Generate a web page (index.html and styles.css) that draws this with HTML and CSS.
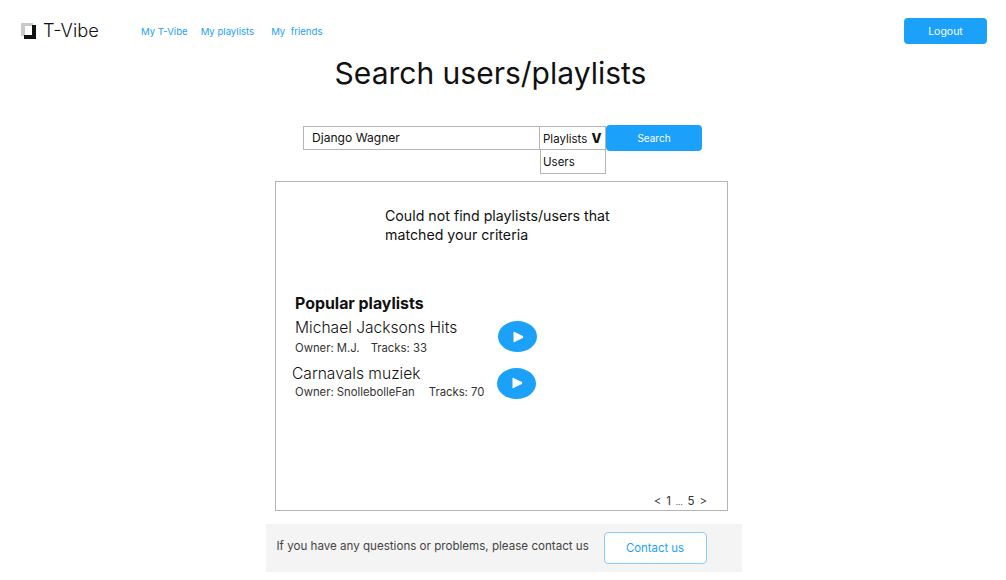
FILE: index.html
```html
<!DOCTYPE html>
<html lang="en">
<head>
    <meta charset="UTF-8">
    <title>T-Vibe - Search</title>
    <link rel="stylesheet" href="styles.css">
</head>
<body>
    <header class="topbar">
        <div class="brand">
            <svg class="brand-icon" width="16" height="16" viewBox="0 0 16 16">
                <rect x="0" y="0" width="12" height="13" fill="#c9c9c9"/>
                <path d="M4 3H11V12H4Z" fill="#fff"/>
                <path d="M11 2H15V16H3V12H11Z" fill="#111"/>
            </svg>
            <span class="brand-name">T-Vibe</span>
        </div>
        <nav class="nav">
            <a href="#">My T-Vibe</a>
            <a href="#">My playlists</a>
            <a href="#" class="nav-friends">My&nbsp; friends</a>
        </nav>
        <button class="btn btn-logout" type="button">Logout</button>
    </header>

    <main class="page">
        <h1 class="title">Search users/playlists</h1>

        <form class="search">
            <div class="search-input">Django Wagner</div>
            <div class="search-type">
                <div class="type-current">Playlists <b class="type-arrow">V</b></div>
                <div class="type-menu">Users</div>
            </div>
            <button class="btn btn-search" type="button">Search</button>
        </form>

        <section class="results">
            <p class="no-results">Could not find playlists/users that matched your criteria</p>

            <h2 class="popular">Popular playlists</h2>

            <div class="playlist">
                <div class="playlist-info">
                    <div class="playlist-name">Michael Jacksons Hits</div>
                    <div class="playlist-meta"><span class="meta-owner">Owner: M.J.</span><span>Tracks: 33</span></div>
                </div>
                <button class="play" type="button">
                    <svg width="12" height="12" viewBox="0 0 12 12"><path d="M1.5 1.6Q1.5 .4 2.6 .9L10.8 5Q12 6 10.8 7L2.6 11.1Q1.5 11.6 1.5 10.4Z" fill="#fff"/></svg>
                </button>
            </div>

            <div class="playlist playlist-second">
                <div class="playlist-info">
                    <div class="playlist-name">Carnavals muziek</div>
                    <div class="playlist-meta"><span class="meta-owner">Owner: SnollebolleFan</span><span>Tracks: 70</span></div>
                </div>
                <button class="play" type="button">
                    <svg width="12" height="12" viewBox="0 0 12 12"><path d="M1.5 1.6Q1.5 .4 2.6 .9L10.8 5Q12 6 10.8 7L2.6 11.1Q1.5 11.6 1.5 10.4Z" fill="#fff"/></svg>
                </button>
            </div>

            <div class="pager">&lt; 1 <small>...</small> 5 &gt;</div>
        </section>

        <footer class="contact">
            <span class="contact-text">If you have any questions or problems, please contact us</span>
            <button class="btn-contact" type="button">Contact us</button>
        </footer>
    </main>
</body>
</html>
```

FILE: styles.css
```css
* {
    box-sizing: border-box;
}

html, body {
    height: 580px;
    overflow: hidden;
}

body {
    margin: 0;
    background-color: #fff;
    color: #111;
    font-family: Inter, "Open Sans", sans-serif;
}

.topbar {
    display: flex;
    align-items: center;
    height: 50px;
    padding: 12px 19px 0 21px;
}

.brand {
    display: flex;
    align-items: center;
    width: 120px;
}

.brand-icon {
    margin-right: 6px;
}

.brand-name {
    margin-top: -2px;
    font-size: 18.3px;
    font-weight: 300;
}

.nav {
    display: flex;
    font-size: 9.6px;
}

.nav a {
    color: #1ba1fa;
    text-decoration: none;
    margin-right: 13px;
}

.nav .nav-friends {
    margin-left: 4px;
}

.btn {
    border: none;
    border-radius: 4px;
    background-color: #1ba1fa;
    color: #fff;
    font-family: inherit;
    font-size: 10.5px;
}

.btn-logout {
    width: 83px;
    height: 26px;
    margin-left: auto;
}

.page {
    display: flex;
    flex-direction: column;
    align-items: center;
}

.title {
    margin: 4px 0 0 -25px;
    height: 38px;
    font-size: 30px;
    font-weight: 400;
    line-height: 38px;
}

.search {
    display: flex;
    width: 399px;
    height: 26px;
    margin: 34px 0 0 -1px;
}

.search-input {
    width: 237px;
    height: 24px;
    border: 1px solid #b5b5b5;
    padding-left: 8px;
    font-size: 12.1px;
    line-height: 22px;
}

.search-type {
    position: relative;
    width: 66px;
    font-size: 11.5px;
}

.type-current {
    height: 24px;
    border: 1px solid #b5b5b5;
    border-left: none;
    padding-left: 3px;
    line-height: 22px;
}

.type-arrow {
    font-size: 13px;
    font-weight: 800;
    margin-left: 1px;
}

.type-menu {
    position: absolute;
    top: 24px;
    left: 0;
    width: 66px;
    height: 24px;
    border: 1px solid #b5b5b5;
    border-top: none;
    padding-left: 2px;
    line-height: 24px;
}

.btn-search {
    width: 96px;
    height: 26px;
    margin-top: -1px;
    font-size: 10px;
}

.results {
    position: relative;
    width: 453px;
    height: 330px;
    margin: 29px 0 0 -3px;
    border: 1px solid #b5b5b5;
    padding: 25px 0 0 19px;
}

.no-results {
    width: 250px;
    margin: 0 0 0 90px;
    font-size: 14.2px;
    line-height: 18.5px;
}

.popular {
    margin: 50px 0 0;
    font-size: 15.9px;
    font-weight: 700;
    line-height: 20px;
}

.playlist {
    display: flex;
    align-items: center;
    margin-top: 3px;
}

.playlist-second {
    margin-top: 7px;
}

.playlist-second .playlist-name {
    margin-left: -3px;
}

.playlist-info {
    width: 203px;
}

.playlist-name {
    font-size: 15.6px;
    font-weight: 300;
    line-height: 22px;
}

.playlist-meta {
    margin-top: 1px;
    color: #333;
    font-size: 11.3px;
    line-height: 16px;
    white-space: nowrap;
}

.playlist-second .playlist-meta {
    margin-top: -1px;
}

.meta-owner {
    margin-right: 11px;
}

.playlist-second .meta-owner {
    margin-right: 14px;
}

.play {
    display: flex;
    align-items: center;
    justify-content: center;
    width: 39px;
    height: 31px;
    padding: 0;
    border: none;
    border-radius: 50%;
    background-color: #1ba1fa;
}

.playlist-second .play {
    margin: 3px 0 0 -1px;
}

.pager {
    position: absolute;
    right: 20px;
    bottom: 0;
    color: #333;
    font-size: 11.5px;
    line-height: 16px;
    word-spacing: 1.6px;
}

.pager small {
    font-size: 8px;
}

.contact {
    display: flex;
    align-items: center;
    width: 476px;
    height: 48px;
    margin: 13px 0 0 1px;
    padding-left: 11px;
    background-color: #f4f4f4;
}

.contact-text {
    margin-top: -4px;
    width: 327px;
    color: #444;
    font-size: 11.6px;
    white-space: nowrap;
}

.btn-contact {
    width: 103px;
    height: 32px;
    border: 1px solid #8ccdfb;
    border-radius: 4px;
    background-color: #fff;
    color: #1ba1fa;
    font-family: inherit;
    font-size: 11.4px;
}
```
